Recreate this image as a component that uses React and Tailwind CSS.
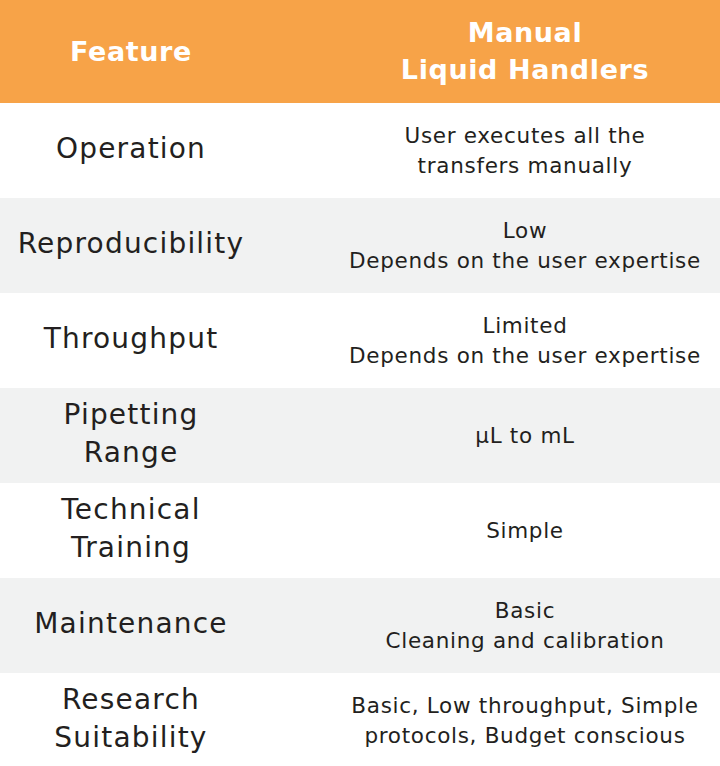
import React from "react";

const rows = [
  { f: ["Operation"], v: ["User executes all the", "transfers manually"] },
  { f: ["Reproducibility"], v: ["Low", "Depends on the user expertise"] },
  { f: ["Throughput"], v: ["Limited", "Depends on the user expertise"] },
  { f: ["Pipetting", "Range"], v: ["µL to mL"] },
  { f: ["Technical", "Training"], v: ["Simple"] },
  { f: ["Maintenance"], v: ["Basic", "Cleaning and calibration"] },
  { f: ["Research", "Suitability"], v: ["Basic, Low throughput, Simple", "protocols, Budget conscious"] },
];

export default function App() {
  return (
    <div
      className="w-[720px] h-[766px] bg-white text-[#231f20] overflow-hidden"
      style={{ fontFamily: "'DejaVu Sans', 'Noto Sans', sans-serif" }}
    >
      <div className="flex h-[103px] bg-[#f7a348] text-white font-bold tracking-[0.6px]">
        <div className="w-[262px] flex items-center justify-center text-[27px] leading-[37px]">
          Feature
        </div>
        <div className="flex-1 pl-[68px] flex flex-col items-center justify-center text-[27px] leading-[37px] pb-[2px]">
          <div>Manual</div>
          <div>Liquid Handlers</div>
        </div>
      </div>
      {rows.map((r, i) => (
        <div
          key={i}
          className={`flex h-[95px] ${i % 2 === 1 ? "bg-[#f1f2f2]" : "bg-white"}`}
        >
          <div className="w-[262px] flex flex-col items-center justify-center text-[28px] leading-[38px] tracking-[1.2px] pb-[3px]">
            {r.f.map((t, j) => (
              <div key={j}>{t}</div>
            ))}
          </div>
          <div className="flex-1 pl-[68px] flex flex-col items-center justify-center text-[21.5px] leading-[30px] tracking-[0.7px]">
            {r.v.map((t, j) => (
              <div key={j}>{t}</div>
            ))}
          </div>
        </div>
      ))}
    </div>
  );
}
